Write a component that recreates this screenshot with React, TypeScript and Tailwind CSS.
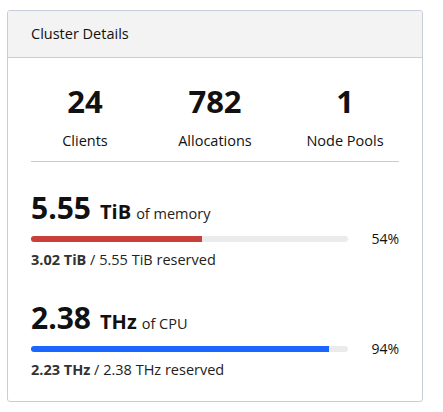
import React from 'react';

const stats = [
  { value: '24', label: 'Clients' },
  { value: '782', label: 'Allocations' },
  { value: '1', label: 'Node Pools' },
];

interface UsageProps {
  total: string;
  unit: string;
  what: string;
  used: string;
  percent: number;
  barClass: string;
}

const Usage: React.FC<UsageProps> = ({ total, unit, what, used, percent, barClass }) => (
  <div>
    <div className="flex items-baseline leading-none">
      <span className="text-[30px] font-bold text-[#111]">{total}</span>
      <span className="ml-[9px] text-[20px] font-bold text-[#111]">{unit}</span>
      <span className="ml-[5px] text-[14.5px] text-[#222]">{what}</span>
    </div>
    <div className="mt-[13px] flex items-center h-[6px]">
      <div className="h-[6px] w-[317px] rounded-full bg-[#ebebeb] overflow-hidden">
        <div className={`h-full ${barClass}`} style={{ width: `${percent}%` }} />
      </div>
      <div className="flex-1 text-right text-[14px] leading-none text-[#111]">{percent}%</div>
    </div>
    <div className="mt-[7px] text-[14.5px] text-[#222]">
      <span className="font-bold text-[#333]">{used}</span> / {total} {unit} reserved
    </div>
  </div>
);

export default function App() {
  return (
    <div className="min-h-screen bg-white pl-[7px] pt-[10px]" style={{ fontFamily: '"Open Sans", "Noto Sans", sans-serif' }}>
      <div className="w-[416px] h-[392px] border border-[#c6ced9] rounded-[3px] overflow-hidden">
        <div className="h-[47px] bg-[#f3f3f3] border-b border-[#c6ced9] flex items-center px-[23px] text-[14.5px] text-[#111]">
          Cluster Details
        </div>
        <div className="grid grid-cols-3 px-[12px] pt-[28px] pb-[9px]">
          {stats.map((s) => (
            <div key={s.label} className="flex flex-col items-center">
              <div className="text-[31px] font-bold leading-none text-[#111]">{s.value}</div>
              <div className="mt-[13px] text-[14.5px] text-[#111]">{s.label}</div>
            </div>
          ))}
        </div>
        <div className="px-[23px]">
          <div className="border-t border-[#c3cdd9]" />
          <div className="pt-[31px]">
            <Usage total="5.55" unit="TiB" what="of memory" used="3.02 TiB" percent={54} barClass="bg-[#c9403a]" />
          </div>
          <div className="pt-[32px]">
            <Usage total="2.38" unit="THz" what="of CPU" used="2.23 THz" percent={94} barClass="bg-[#1a66ff]" />
          </div>
        </div>
      </div>
    </div>
  );
}
